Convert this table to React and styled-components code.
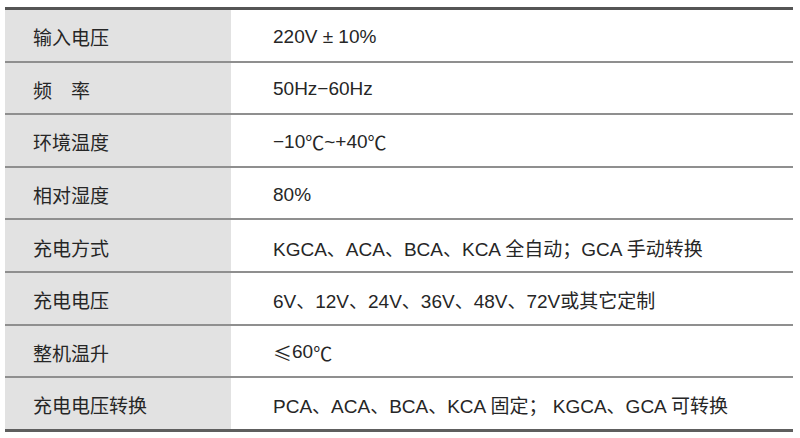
import React from "react";
import styled, { createGlobalStyle } from "styled-components";

const Global = createGlobalStyle`
  html, body { margin: 0; padding: 0; background: #ffffff; }
  body { width: 800px; height: 438px; overflow: hidden; }
`;

const Page = styled.div`
  padding: 7px 7px 0 5px;
  font-family: "Liberation Sans", "Noto Sans CJK SC", sans-serif;
  color: #262626;
`;

const Table = styled.div`
  display: flex;
  flex-direction: column;
  border-top: 3px solid #555555;
  border-bottom: 3px solid #5e5e5e;
`;

const Row = styled.div`
  display: grid;
  grid-template-columns: 226px 1fr;
  height: 50.6px;
  border-top: ${(p) => (p.$first ? "none" : "2px solid #8f8f8f")};
`;

const Label = styled.div`
  background: #e2e2e2;
  display: flex;
  align-items: center;
  padding: 3px 0 0 28px;
  font-family: "Noto Sans CJK SC", sans-serif;
  font-size: 19px;
`;

const Value = styled.div`
  display: flex;
  align-items: center;
  padding: 3px 0 0 42px;
  font-size: 19px;
  white-space: pre;
`;

const Sym = styled.span`
  font-family: "Noto Sans CJK SC", sans-serif;
`;

const rows = [
  ["输入电压", "220V ± 10%"],
  ["频　率", "50Hz−60Hz"],
  ["环境温度", <>−10<Sym>℃</Sym>~+40<Sym>℃</Sym></>],
  ["相对湿度", "80%"],
  ["充电方式", "KGCA、ACA、BCA、KCA 全自动；GCA 手动转换"],
  ["充电电压", "6V、12V、24V、36V、48V、72V或其它定制"],
  ["整机温升", <><Sym>≤</Sym>60<Sym>℃</Sym></>],
  ["充电电压转换", "PCA、ACA、BCA、KCA 固定； KGCA、GCA 可转换"],
];

export default function App() {
  return (
    <>
      <Global />
      <Page>
        <Table>
          {rows.map(([k, v], i) => (
            <Row key={k} $first={i === 0}>
              <Label>{k}</Label>
              <Value>{v}</Value>
            </Row>
          ))}
        </Table>
      </Page>
    </>
  );
}
